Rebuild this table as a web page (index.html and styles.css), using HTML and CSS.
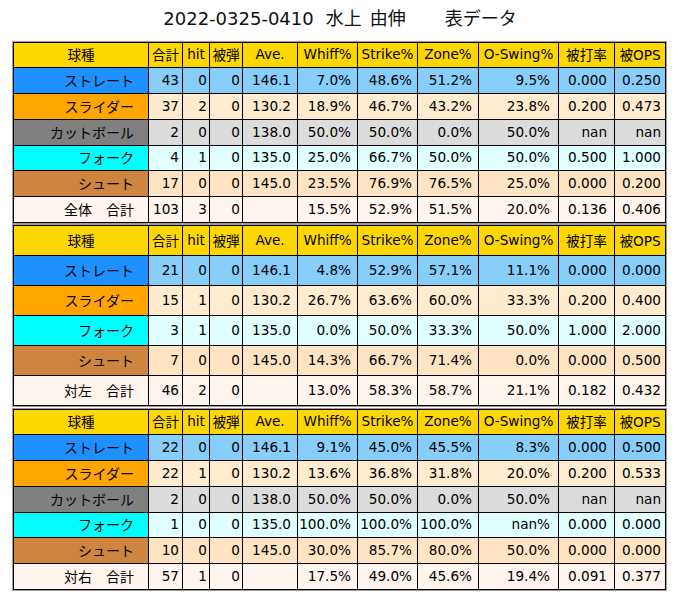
FILE: index.html
```html
<!DOCTYPE html>
<html lang="ja">
<head>
<meta charset="utf-8">
<title>2022-0325-0410 水上 由伸 表データ</title>
<link rel="stylesheet" href="styles.css">
</head>
<body>
<div class="page">
  <header class="title">
    <span class="t-date">2022-0325-0410</span>
    <span class="t-last">水上</span>
    <span class="t-first">由伸</span>
    <span class="t-label">表データ</span>
  </header>

  <div class="tbl tbl-a">
    <div class="row head"><div>球種</div><div>合計</div><div>hit</div><div>被弾</div><div>Ave.</div><div>Whiff%</div><div>Strike%</div><div>Zone%</div><div>O-Swing%</div><div>被打率</div><div>被OPS</div></div>
    <div class="row str"><div>ストレート</div><div>43</div><div>0</div><div>0</div><div>146.1</div><div>7.0%</div><div>48.6%</div><div>51.2%</div><div>9.5%</div><div>0.000</div><div>0.250</div></div>
    <div class="row sld"><div>スライダー</div><div>37</div><div>2</div><div>0</div><div>130.2</div><div>18.9%</div><div>46.7%</div><div>43.2%</div><div>23.8%</div><div>0.200</div><div>0.473</div></div>
    <div class="row cut"><div>カットボール</div><div>2</div><div>0</div><div>0</div><div>138.0</div><div>50.0%</div><div>50.0%</div><div>0.0%</div><div>50.0%</div><div>nan</div><div>nan</div></div>
    <div class="row frk"><div>フォーク</div><div>4</div><div>1</div><div>0</div><div>135.0</div><div>25.0%</div><div>66.7%</div><div>50.0%</div><div>50.0%</div><div>0.500</div><div>1.000</div></div>
    <div class="row sht"><div>シュート</div><div>17</div><div>0</div><div>0</div><div>145.0</div><div>23.5%</div><div>76.9%</div><div>76.5%</div><div>25.0%</div><div>0.000</div><div>0.200</div></div>
    <div class="row tot"><div>全体　合計</div><div>103</div><div>3</div><div>0</div><div></div><div>15.5%</div><div>52.9%</div><div>51.5%</div><div>20.0%</div><div>0.136</div><div>0.406</div></div>
  </div>

  <div class="tbl tbl-b">
    <div class="row head"><div>球種</div><div>合計</div><div>hit</div><div>被弾</div><div>Ave.</div><div>Whiff%</div><div>Strike%</div><div>Zone%</div><div>O-Swing%</div><div>被打率</div><div>被OPS</div></div>
    <div class="row str"><div>ストレート</div><div>21</div><div>0</div><div>0</div><div>146.1</div><div>4.8%</div><div>52.9%</div><div>57.1%</div><div>11.1%</div><div>0.000</div><div>0.000</div></div>
    <div class="row sld"><div>スライダー</div><div>15</div><div>1</div><div>0</div><div>130.2</div><div>26.7%</div><div>63.6%</div><div>60.0%</div><div>33.3%</div><div>0.200</div><div>0.400</div></div>
    <div class="row frk"><div>フォーク</div><div>3</div><div>1</div><div>0</div><div>135.0</div><div>0.0%</div><div>50.0%</div><div>33.3%</div><div>50.0%</div><div>1.000</div><div>2.000</div></div>
    <div class="row sht"><div>シュート</div><div>7</div><div>0</div><div>0</div><div>145.0</div><div>14.3%</div><div>66.7%</div><div>71.4%</div><div>0.0%</div><div>0.000</div><div>0.500</div></div>
    <div class="row tot"><div>対左　合計</div><div>46</div><div>2</div><div>0</div><div></div><div>13.0%</div><div>58.3%</div><div>58.7%</div><div>21.1%</div><div>0.182</div><div>0.432</div></div>
  </div>

  <div class="tbl tbl-c">
    <div class="row head"><div>球種</div><div>合計</div><div>hit</div><div>被弾</div><div>Ave.</div><div>Whiff%</div><div>Strike%</div><div>Zone%</div><div>O-Swing%</div><div>被打率</div><div>被OPS</div></div>
    <div class="row str"><div>ストレート</div><div>22</div><div>0</div><div>0</div><div>146.1</div><div>9.1%</div><div>45.0%</div><div>45.5%</div><div>8.3%</div><div>0.000</div><div>0.500</div></div>
    <div class="row sld"><div>スライダー</div><div>22</div><div>1</div><div>0</div><div>130.2</div><div>13.6%</div><div>36.8%</div><div>31.8%</div><div>20.0%</div><div>0.200</div><div>0.533</div></div>
    <div class="row cut"><div>カットボール</div><div>2</div><div>0</div><div>0</div><div>138.0</div><div>50.0%</div><div>50.0%</div><div>0.0%</div><div>50.0%</div><div>nan</div><div>nan</div></div>
    <div class="row frk"><div>フォーク</div><div>1</div><div>0</div><div>0</div><div>135.0</div><div>100.0%</div><div>100.0%</div><div>100.0%</div><div>nan%</div><div>0.000</div><div>0.000</div></div>
    <div class="row sht"><div>シュート</div><div>10</div><div>0</div><div>0</div><div>145.0</div><div>30.0%</div><div>85.7%</div><div>80.0%</div><div>50.0%</div><div>0.000</div><div>0.000</div></div>
    <div class="row tot"><div>対右　合計</div><div>57</div><div>1</div><div>0</div><div></div><div>17.5%</div><div>49.0%</div><div>45.6%</div><div>19.4%</div><div>0.091</div><div>0.377</div></div>
  </div>
</div>
</body>
</html>
```

FILE: styles.css
```css
* { box-sizing: border-box; }

html, body {
  margin: 0;
  padding: 0;
  background: #ffffff;
}

.page {
  width: 680px;
  height: 595px;
  color: #000;
  font-family: "DejaVu Sans", "Noto Sans CJK JP", sans-serif;
}

.title {
  height: 42px;
  padding-top: 9px;
  display: flex;
  justify-content: center;
  align-items: baseline;
  font-size: 18px;
  line-height: 20px;
  color: #111;
}
.t-last { margin-left: 12px; }
.t-first { margin-left: 8px; }
.t-label { margin-left: 39px; }

.tbl {
  margin-left: 13px;
  width: 653px;
  display: grid;
  grid-template-columns: 134px 33px 26px 32px 54px 59px 59px 60px 79px 55px 50px;
  gap: 1px;
  padding: 1px;
  background: #000;
  box-shadow: 0 0 0 1px #9c9c9c;
  font-size: 13.6px;
}
.tbl-a { grid-template-rows: 24px 25px 25px 25px 24px 25px 25px; }
.tbl-b { margin-top: 2px; grid-template-rows: repeat(6, 29px); }
.tbl-c { margin-top: 3px; grid-template-rows: 24px 25px 25px 25px 24px 25px 25px; }

.row { display: contents; }

.row > div {
  display: flex;
  align-items: center;
  justify-content: flex-end;
  padding-bottom: 2px;
  white-space: nowrap;
  overflow: visible;
}

.row > div:nth-child(1) { padding-right: 14px; font-size: 14px; }
.row > div:nth-child(2) { padding-right: 3px; }
.row > div:nth-child(3) { padding-right: 2px; }
.row > div:nth-child(4) { padding-right: 2px; }
.row > div:nth-child(5) { padding-right: 6px; }
.row > div:nth-child(6) { padding-right: 6px; }
.row > div:nth-child(7) { padding-right: 5px; }
.row > div:nth-child(8) { padding-right: 6px; }
.row > div:nth-child(9) { padding-right: 8px; }
.row > div:nth-child(10) { padding-right: 7px; }
.row > div:nth-child(11) { padding-right: 4px; }

.head > div {
  background: #ffd700;
  justify-content: center;
}
.row.head > div { padding-right: 0; padding-left: 0; }
.row.head > div:nth-child(1) { font-size: 13.6px; }

.str > div { background: #87cefa; }
.str > div:first-child { background: #1e90ff; }

.sld > div { background: #ffebcd; }
.sld > div:first-child { background: #ffa500; }

.cut > div { background: #dcdcdc; }
.cut > div:first-child { background: #808080; }

.frk > div { background: #e0ffff; }
.frk > div:first-child { background: #00ffff; }

.sht > div { background: #ffe4c4; }
.sht > div:first-child { background: #cd853f; }

.tot > div { background: #fff5ee; }
```
